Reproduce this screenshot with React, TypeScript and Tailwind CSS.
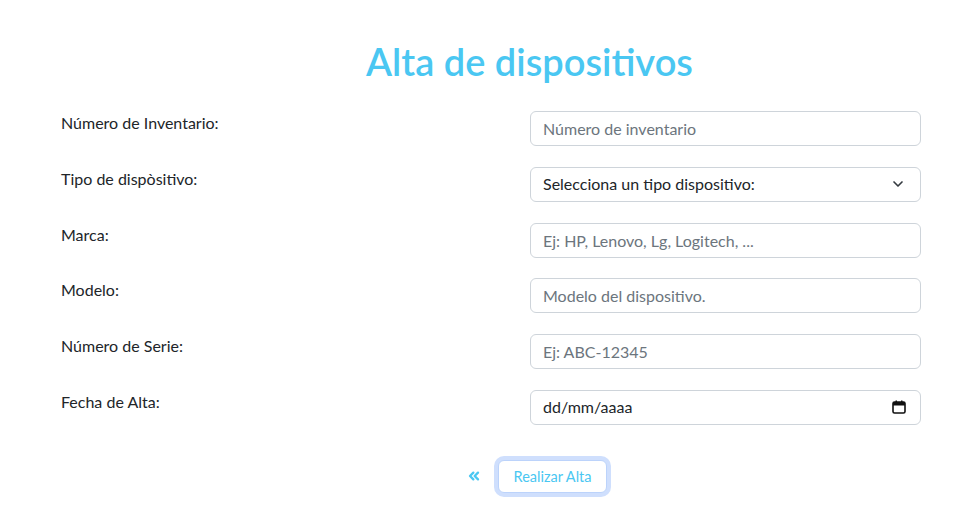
import React from 'react'
import { ChevronsLeft, ChevronDown } from 'lucide-react'

const fields = [
  { label: 'Número de Inventario:', placeholder: 'Número de inventario' },
  { label: 'Tipo de dispòsitivo:', type: 'select' },
  { label: 'Marca:', placeholder: 'Ej: HP, Lenovo, Lg, Logitech, ...' },
  { label: 'Modelo:', placeholder: 'Modelo del dispositivo.' },
  { label: 'Número de Serie:', placeholder: 'Ej: ABC-12345' },
  { label: 'Fecha de Alta:', type: 'date' },
]

const inputClass =
  'w-full h-[35px] px-3 border border-[#ced4da] rounded-[6px] bg-white text-[16px] text-[#212529] placeholder:text-[#6c757d] outline-none'

const App = () => {
  return (
    <div className="min-h-screen bg-white font-['Lato','Noto_Sans',sans-serif] text-[#212529]">
      {/* Title */}
      <div className="pt-[37px] pl-[80px] text-center">
        <h1 className="text-[38px] leading-[48px] font-semibold text-[#4ac7f2]">Alta de dispositivos</h1>
      </div>

      {/* Form rows */}
      <form className="mt-[26px] pl-[61px] flex flex-col gap-[20.8px]" onSubmit={(e) => e.preventDefault()}>
        {fields.map((f) => (
          <div key={f.label} className="flex items-start">
            <label className="w-[469px] text-[16px] leading-[24px]">{f.label}</label>
            <div className="w-[391px]">
              {f.type === 'select' ? (
                <div className={inputClass + ' flex items-center justify-between'}>
                  <span>Selecciona un tipo dispositivo:</span>
                  <ChevronDown size={16} strokeWidth={2.5} className="text-[#343a40] mr-[2px]" />
                </div>
              ) : f.type === 'date' ? (
                <div className={inputClass + ' flex items-center justify-between'}>
                  <span>dd/mm/aaaa</span>
                  <svg width="14" height="14" viewBox="0 0 14 14" className="mr-[2px]">
                    <rect x="1" y="2" width="12" height="11" rx="1.5" fill="none" stroke="#111" strokeWidth="1.6" />
                    <rect x="1" y="2" width="12" height="3.5" fill="#111" />
                    <rect x="3.5" y="0.5" width="1.5" height="3" fill="#111" />
                    <rect x="9" y="0.5" width="1.5" height="3" fill="#111" />
                  </svg>
                </div>
              ) : (
                <input type="text" placeholder={f.placeholder} className={inputClass} />
              )}
            </div>
          </div>
        ))}
      </form>

      {/* Actions */}
      <div className="mt-[35px] pl-[94px] flex items-center justify-center gap-[16px]">
        <ChevronsLeft size={16} strokeWidth={3.5} className="text-[#4ac7f2]" />
        <button className="h-[33px] px-[15px] text-[14.5px] text-[#4ac7f2] bg-white border border-[#bcd3fb] rounded-[6px] ring-4 ring-[#cfdffd]">
          Realizar Alta
        </button>
      </div>
    </div>
  )
}

export default App
